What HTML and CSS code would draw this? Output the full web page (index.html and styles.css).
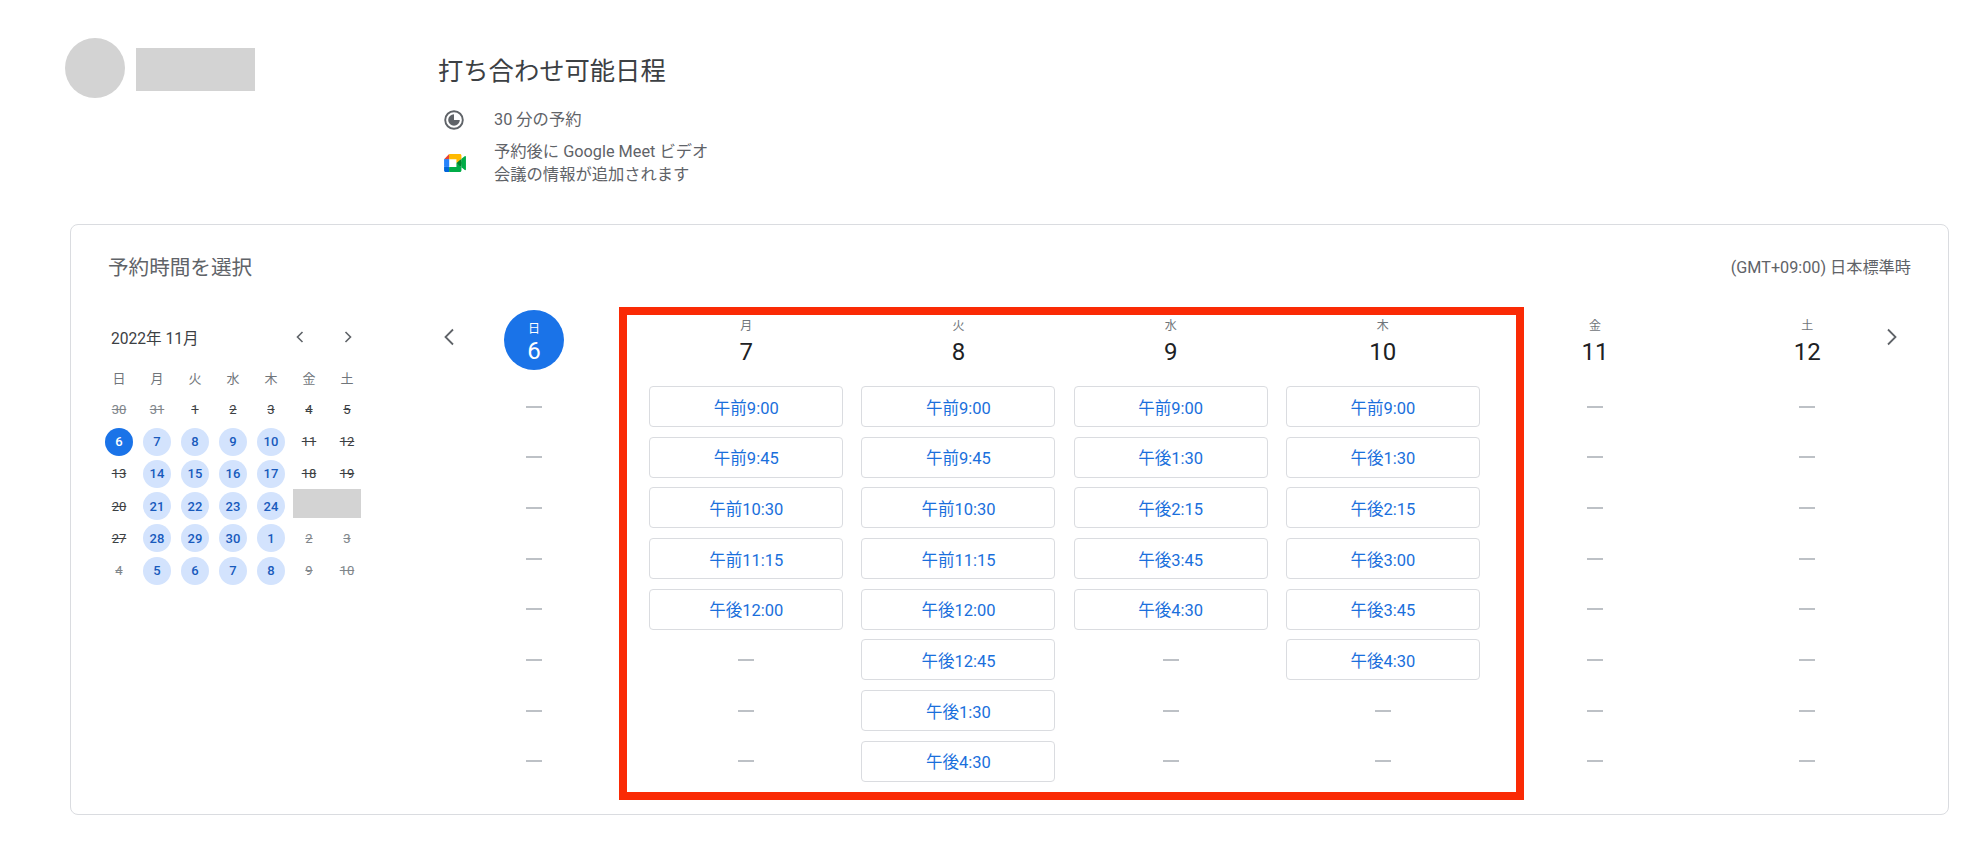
FILE: index.html
```html
<!DOCTYPE html>
<html lang="ja">
<head>
  <meta charset="UTF-8" />
  <title>打ち合わせ可能日程</title>
  <link rel="stylesheet" href="styles.css">
</head>
<body>
  <header class="top">
    <div class="owner">
      <div class="avatar"></div>
      <div class="owner-name"></div>
    </div>
    <div class="event">
      <h1>打ち合わせ可能日程</h1>
      <div class="event-row first">
        <svg class="icon-clock" viewBox="0 0 20 20"><circle cx="10" cy="10" r="8.8" fill="none" stroke="#5f6368" stroke-width="1.9"/><path d="M10 4.2V10H15.8A5.8 5.8 0 1 1 10 4.2z" fill="#5f6368"/></svg>
        <p>30 分の予約</p>
      </div>
      <div class="event-row">
        <svg class="icon-meet" viewBox="0 0 87.5 72"><path fill="#00832d" d="M49.5 36l8.53 9.75 11.47 7.33 2-17.02-2-16.64-11.69 6.44z"/><path fill="#0066da" d="M0 51.5V66c0 3.315 2.685 6 6 6h14.5l3-10.96-3-9.54-9.95-3z"/><path fill="#e94235" d="M20.5 0L0 20.5l10.55 3 9.95-3 2.95-9.41z"/><path fill="#2684fc" d="M20.5 20.5H0v31h20.5z"/><path fill="#00ac47" d="M82.6 8.68L69.5 19.42v33.66l13.16 10.79c1.97 1.54 4.85.135 4.85-2.37V11c0-2.535-2.945-3.925-4.91-2.32zM49.5 36v15.5h-29V72h43c3.315 0 6-2.685 6-6V53.08z"/><path fill="#ffba00" d="M63.5 0h-43v20.5h29V36l20-16.57V6c0-3.315-2.685-6-6-6z"/></svg>
        <p>予約後に Google Meet ビデオ<br>会議の情報が追加されます</p>
      </div>
    </div>
  </header>

  <main class="card">
    <div class="card-head">
      <h2>予約時間を選択</h2>
      <span class="timezone">(GMT+09:00) 日本標準時</span>
    </div>

    <div class="card-body">
      <section class="mini">
        <div class="mini-head">
          <span class="mini-title">2022年 11月</span>
          <div class="mini-nav">
            <svg viewBox="0 0 10 14"><path d="M7.5 2L2.5 7l5 5" /></svg>
            <svg viewBox="0 0 10 14"><path d="M2.5 2l5 5-5 5" /></svg>
          </div>
        </div>
        <div class="mini-grid">
          <span class="wd">日</span><span class="wd">月</span><span class="wd">火</span><span class="wd">水</span><span class="wd">木</span><span class="wd">金</span><span class="wd">土</span>

          <span class="d out">30</span><span class="d out">31</span><span class="d off">1</span><span class="d off">2</span><span class="d off">3</span><span class="d off">4</span><span class="d off">5</span>

          <span class="d"><b class="sel">6</b></span><span class="d"><b>7</b></span><span class="d"><b>8</b></span><span class="d"><b>9</b></span><span class="d"><b>10</b></span><span class="d off">11</span><span class="d off">12</span>

          <span class="d off">13</span><span class="d"><b>14</b></span><span class="d"><b>15</b></span><span class="d"><b>16</b></span><span class="d"><b>17</b></span><span class="d off">18</span><span class="d off">19</span>

          <span class="d off">20</span><span class="d"><b>21</b></span><span class="d"><b>22</b></span><span class="d"><b>23</b></span><span class="d"><b>24</b></span><span class="d"><i class="mask"></i></span><span class="d"></span>

          <span class="d off">27</span><span class="d"><b>28</b></span><span class="d"><b>29</b></span><span class="d"><b>30</b></span><span class="d"><b>1</b></span><span class="d out">2</span><span class="d out">3</span>

          <span class="d out">4</span><span class="d"><b>5</b></span><span class="d"><b>6</b></span><span class="d"><b>7</b></span><span class="d"><b>8</b></span><span class="d out">9</span><span class="d out">10</span>
        </div>
      </section>

      <section class="week">
        <div class="day today">
          <div class="day-head"><div class="today-dot"><span>日</span><strong>6</strong></div></div>
          <div class="slots">
            <i class="dash"></i><i class="dash"></i><i class="dash"></i><i class="dash"></i><i class="dash"></i><i class="dash"></i><i class="dash"></i><i class="dash"></i>
          </div>
        </div>

        <div class="day">
          <div class="day-head"><span>月</span><strong>7</strong></div>
          <div class="slots">
            <a class="slot">午前9:00</a>
            <a class="slot">午前9:45</a>
            <a class="slot">午前10:30</a>
            <a class="slot">午前11:15</a>
            <a class="slot">午後12:00</a>
            <i class="dash"></i><i class="dash"></i><i class="dash"></i>
          </div>
        </div>

        <div class="day">
          <div class="day-head"><span>火</span><strong>8</strong></div>
          <div class="slots">
            <a class="slot">午前9:00</a>
            <a class="slot">午前9:45</a>
            <a class="slot">午前10:30</a>
            <a class="slot">午前11:15</a>
            <a class="slot">午後12:00</a>
            <a class="slot">午後12:45</a>
            <a class="slot">午後1:30</a>
            <a class="slot">午後4:30</a>
          </div>
        </div>

        <div class="day">
          <div class="day-head"><span>水</span><strong>9</strong></div>
          <div class="slots">
            <a class="slot">午前9:00</a>
            <a class="slot">午後1:30</a>
            <a class="slot">午後2:15</a>
            <a class="slot">午後3:45</a>
            <a class="slot">午後4:30</a>
            <i class="dash"></i><i class="dash"></i><i class="dash"></i>
          </div>
        </div>

        <div class="day">
          <div class="day-head"><span>木</span><strong>10</strong></div>
          <div class="slots">
            <a class="slot">午前9:00</a>
            <a class="slot">午後1:30</a>
            <a class="slot">午後2:15</a>
            <a class="slot">午後3:00</a>
            <a class="slot">午後3:45</a>
            <a class="slot">午後4:30</a>
            <i class="dash"></i><i class="dash"></i>
          </div>
        </div>

        <div class="day">
          <div class="day-head"><span>金</span><strong>11</strong></div>
          <div class="slots">
            <i class="dash"></i><i class="dash"></i><i class="dash"></i><i class="dash"></i><i class="dash"></i><i class="dash"></i><i class="dash"></i><i class="dash"></i>
          </div>
        </div>

        <div class="day">
          <div class="day-head"><span>土</span><strong>12</strong></div>
          <div class="slots">
            <i class="dash"></i><i class="dash"></i><i class="dash"></i><i class="dash"></i><i class="dash"></i><i class="dash"></i><i class="dash"></i><i class="dash"></i>
          </div>
        </div>

        <svg class="week-nav prev" viewBox="0 0 12 18"><path d="M10 1.5L2.5 9l7.5 7.5" /></svg>
        <svg class="week-nav next" viewBox="0 0 12 18"><path d="M2 1.5L9.5 9 2 16.5" /></svg>
        <div class="highlight"></div>
      </section>
    </div>
  </main>
</body>
</html>
```

FILE: styles.css
```css
* {
  box-sizing: border-box;
}

body {
  margin: 0;
  width: 1972px;
  height: 844px;
  overflow: hidden;
  background: #fff;
  color: #3c4043;
  font-family: Roboto, "Noto Sans CJK JP", sans-serif;
}

/* top block */
.top {
  display: flex;
  height: 224px;
  padding-top: 38px;
}

.owner {
  display: flex;
  gap: 11px;
  width: 438px;
  padding-left: 65px;
}

.avatar {
  width: 60px;
  height: 60px;
  border-radius: 50%;
  background: #d3d3d3;
}

.owner-name {
  width: 119px;
  height: 43px;
  margin-top: 10px;
  background: #d3d3d3;
}

.event {
  padding-top: 17px;
}

.event h1 {
  margin: 0;
  font-size: 25.3px;
  font-weight: 400;
  line-height: 34px;
}

.event-row {
  display: flex;
  align-items: center;
  margin-top: 9px;
}

.event-row.first {
  margin-top: 19px;
}

.event-row p {
  margin: 0;
  font-size: 16.3px;
  line-height: 23px;
  color: #5f6368;
}

.icon-clock {
  width: 20px;
  height: 20px;
  margin: 0 30px 0 6px;
}

.icon-meet {
  width: 22px;
  height: 18px;
  margin: 0 28px 0 6px;
}

/* card */
.card {
  width: 1879px;
  height: 591px;
  margin-left: 70px;
  padding: 0 37px;
  border: 1px solid #dadce0;
  border-radius: 8px;
}

.card-head {
  display: flex;
  justify-content: space-between;
  align-items: center;
  height: 85px;
  padding-bottom: 3px;
}

.card-head h2 {
  margin: 0;
  font-size: 20.6px;
  font-weight: 400;
  color: #5f6368;
}

.timezone {
  font-size: 16.2px;
  color: #5f6368;
}

.card-body {
  display: flex;
}

/* month calendar */
.mini {
  width: 266px;
  margin-left: -8px;
}

.mini-head {
  display: flex;
  justify-content: space-between;
  align-items: center;
  height: 51px;
  padding: 2px 13px 0 11px;
}

.mini-title {
  font-size: 15.6px;
  color: #3c4043;
}

.mini-nav {
  display: flex;
  gap: 38px;
}

.mini-nav svg {
  width: 10px;
  height: 14px;
}

.mini-nav path {
  fill: none;
  stroke: #5f6368;
  stroke-width: 1.6;
}

.mini-grid {
  display: grid;
  grid-template-columns: repeat(7, 38px);
  grid-auto-rows: 32.25px;
}

.wd,
.d {
  display: flex;
  justify-content: center;
  align-items: center;
  position: relative;
  font-size: 13px;
}

.wd {
  color: #70757a;
}

.d b {
  display: flex;
  justify-content: center;
  align-items: center;
  width: 28px;
  height: 28px;
  border-radius: 50%;
  background: #d3e3fd;
  color: #185abc;
  font-weight: 500;
}

.d b.sel {
  background: #1a73e8;
  color: #fff;
}

.off {
  color: #3c4043;
  text-decoration: line-through;
}

.out {
  color: #80868b;
  text-decoration: line-through;
}

.mask {
  position: absolute;
  left: 3px;
  top: -1px;
  width: 68px;
  height: 29px;
  background: #d3d3d3;
}

/* week columns */
.week {
  display: flex;
  position: relative;
  margin-left: 62px;
}

.day {
  width: 212.2px;
}

.day-head {
  display: flex;
  flex-direction: column;
  align-items: center;
  height: 76px;
  padding-top: 8px;
}

.day-head span {
  font-size: 12px;
  line-height: 16px;
  color: #70757a;
}

.day-head strong {
  margin-top: 2px;
  font-size: 24px;
  font-weight: 400;
  line-height: 32px;
  color: #202124;
}

.today .day-head {
  padding-top: 0;
}

.today-dot {
  display: flex;
  flex-direction: column;
  align-items: center;
  width: 60px;
  height: 60px;
  padding-top: 11px;
  border-radius: 50%;
  background: #1a73e8;
}

.day-head .today-dot span,
.day-head .today-dot strong {
  color: #fff;
}

.day-head .today-dot strong {
  margin-top: 0;
  line-height: 28px;
}

.slots {
  display: grid;
  grid-auto-rows: 41px;
  row-gap: 9.7px;
  justify-items: center;
  align-items: center;
}

.slot {
  display: flex;
  justify-content: center;
  align-items: center;
  width: 194px;
  height: 41px;
  border: 1px solid #dadce0;
  border-radius: 4px;
  font-size: 16.5px;
  color: #1a6fdc;
}

.dash {
  width: 16px;
  height: 2px;
  background: #bdc1c6;
}

.week-nav {
  position: absolute;
  top: 18px;
  width: 12px;
  height: 18px;
}

.week-nav path {
  fill: none;
  stroke: #5f6368;
  stroke-width: 1.8;
}

.week-nav.prev {
  left: 15px;
}

.week-nav.next {
  left: 1458px;
}

/* annotation drawn on the screenshot */
.highlight {
  position: absolute;
  left: 191px;
  top: -3px;
  width: 905px;
  height: 493px;
  border: 8px solid #fa2a05;
}
```
